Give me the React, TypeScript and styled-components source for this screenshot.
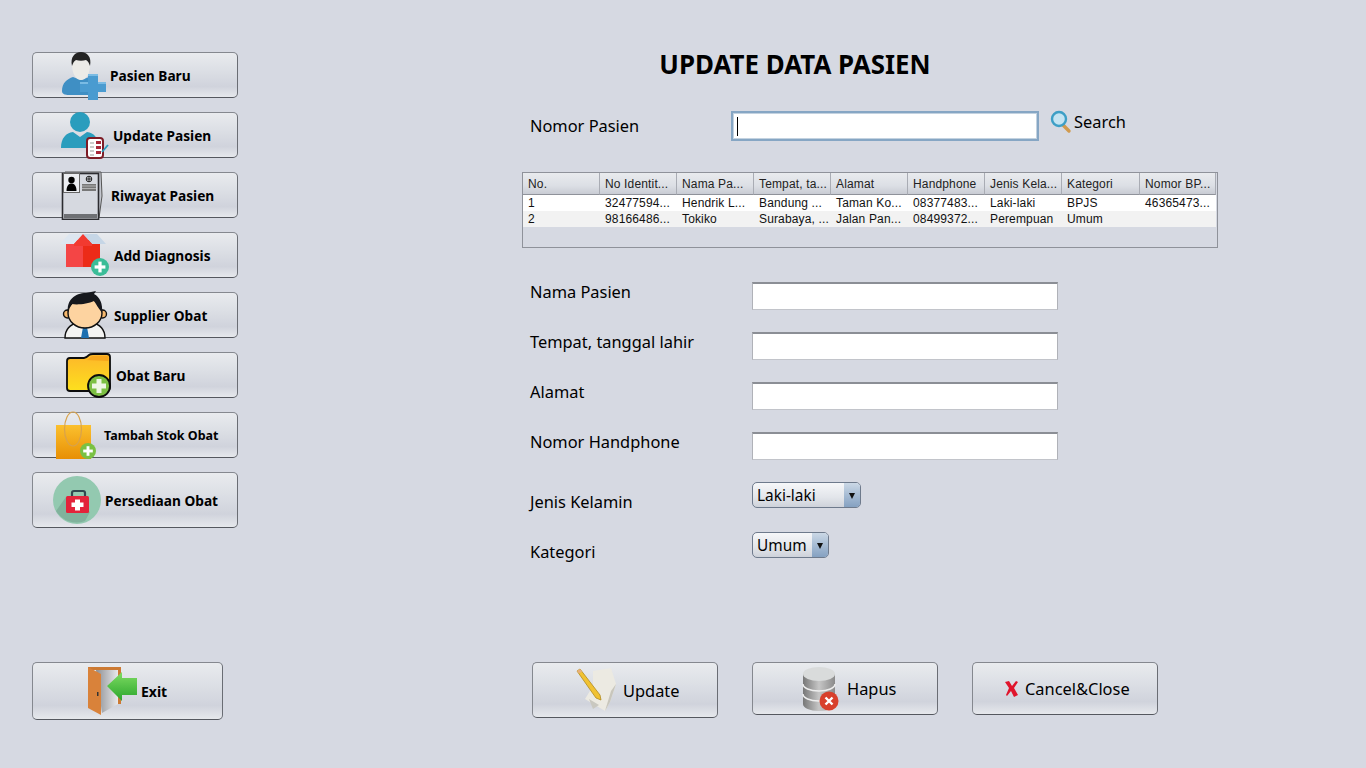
import styled, { createGlobalStyle } from 'styled-components';

const GlobalStyle = createGlobalStyle`
  html, body {
    margin: 0;
    padding: 0;
    background: #d6d9e2;
  }
  * {
    box-sizing: border-box;
  }
`;

/* ===== icons ===== */

function PlusBadge({ cx, cy, r, fill, stroke }: { cx: number; cy: number; r: number; fill: string; stroke?: string }) {
  const arm = r * 0.6;
  const w = r * 0.36;
  return (
    <g>
      <circle cx={cx} cy={cy} r={r} fill={fill} stroke={stroke} strokeWidth={stroke ? 1.6 : 0} />
      <rect x={cx - arm} y={cy - w / 2} width={arm * 2} height={w} fill="#fff" />
      <rect x={cx - w / 2} y={cy - arm} width={w} height={arm * 2} fill="#fff" />
    </g>
  );
}

const PasienBaruIcon = () => (
  <IconSvg width="50" height="50" viewBox="0 0 50 50">
    <path d="M2 41c0-8 5-12 11-14l8 3 8-3 6 5v13H9c-4 0-7-1-7-4z" fill="#3f8fc4" />
    <path d="M12 14c0-7 4-11 9-11s9 4 9 11c0 10-4 16-9 16s-9-6-9-16z" fill="#ecebe7" />
    <path d="M12 16c-2-9 3-14 9-14s11 5 9 14c-1-3-2-5-4-6-3 1-7 1-10 0-2 1-3 3-4 6z" fill="#242424" />
    <path d="M28 24h10v8h8v10h-8v8H28v-8h-8V32h8z" fill="#4a9bd0" />
    <path d="M28 24h10v2H28zM20 32h8v2h-8zM38 32h8v2h-8z" fill="#7abbe4" />
  </IconSvg>
);

const UpdatePasienIcon = () => (
  <IconSvg width="50" height="50" viewBox="0 0 50 50">
    <circle cx="20" cy="12" r="10" fill="#2a9dbd" />
    <path d="M1 38c0-10 5-15 12-16l7 5 7-5c7 1 12 6 12 16z" fill="#2a9dbd" />
    <rect x="27" y="28" width="16" height="20" rx="3" fill="#fff" stroke="#7d1c26" strokeWidth="2" />
    <path d="M30 33h4M30 37h4M30 41h4M30 45h4" stroke="#999" strokeWidth="1" />
    <path d="M36 31h5v3h-5zM36 36h5v3h-5zM36 41h5v3h-5z" fill="#a8283a" />
    <path d="M42 42l6-7" stroke="#2a9dbd" strokeWidth="1.8" />
  </IconSvg>
);

const RiwayatIcon = () => (
  <IconSvg width="50" height="50" viewBox="0 0 50 50">
    <path d="M5 2h36l1 24-3 22" fill="#c4c7cf" stroke="#555" strokeWidth="1" />
    <rect x="2.5" y="3.5" width="36" height="46" fill="#d6d9e0" stroke="#2c2c30" strokeWidth="1.6" />
    <rect x="3.5" y="3.5" width="16" height="19" fill="#eceef2" stroke="#666" strokeWidth="1" />
    <circle cx="11.5" cy="10" r="3.2" fill="#000" />
    <path d="M6.5 21c0-5 2-7.500 5-7.500s5 2.500 5 7.500z" fill="#000" />
    <circle cx="29" cy="9" r="2.800" fill="none" stroke="#222" strokeWidth="1" />
    <path d="M26 9h6M29 6v6" stroke="#222" strokeWidth="1" />
    <path d="M22 14h14v7H22z" fill="#777" />
    <path d="M22 16h14M22 18.500h14" stroke="#ccc" strokeWidth="0.7" />
    <rect x="4" y="44" width="33" height="4.500" fill="#6e7074" />
  </IconSvg>
);

const AddDiagnosisIcon = () => (
  <IconSvg width="50" height="50" viewBox="0 0 50 50">
    <path d="M6 10h17v27H6z" fill="#f44545" />
    <path d="M23 10h17v27H23z" fill="#ec2b18" />
    <path d="M0 14L9 4h14l-9 10z" fill="#dde6f0" />
    <path d="M46 14L37 4H23l9 10z" fill="#c6d6e6" />
    <path d="M14 14L23 4l9 10v2H14z" fill="#f23a30" />
    <PlusBadge cx={40} cy={37} r={9} fill="#3bbd98" />
  </IconSvg>
);

const SupplierIcon = () => (
  <IconSvg width="50" height="50" viewBox="0 0 50 50">
    <path d="M3 48c0-10 6-14 14-16h12c8 2 14 6 14 16z" fill="#f4f4f2" stroke="#111" strokeWidth="1.400" />
    <path d="M20 33h6l-1 4 2 11h-8l2-11z" fill="#1d6fb0" />
    <circle cx="5.500" cy="24" r="4" fill="#f7b96e" stroke="#111" strokeWidth="1.400" />
    <circle cx="40.500" cy="24" r="4" fill="#f7b96e" stroke="#111" strokeWidth="1.400" />
    <ellipse cx="23" cy="23" rx="17" ry="15" fill="#fdd3a0" stroke="#111" strokeWidth="1.400" />
    <path d="M6 23C4 10 13 3 24 3l10-2-2 3c6 3 9 10 8 19-3-4-6-9-8-12-6 3-17 4-22 3-2 2-4 5-4 9z" fill="#16181d" />
  </IconSvg>
);

const ObatBaruIcon = () => (
  <IconSvg width="50" height="50" viewBox="0 0 50 50">
    <defs>
      <linearGradient id="folderFill" x1="0" y1="0" x2="0" y2="1">
        <stop offset="0" stopColor="#fdb62a" />
        <stop offset="1" stopColor="#fde01e" />
      </linearGradient>
    </defs>
    <path d="M3 11c0-2 1-3 3-3h14c2 0 3-1 5-3 1-1 2-1 4-1h14c2 0 3 1 3 3v30c0 3-1 4-3 4H6c-2 0-3-1-3-3z" fill="url(#folderFill)" stroke="#0c0c0c" strokeWidth="1.800" />
    <path d="M22 10c3 0 4-4 7-4h14c1 0 1.500 1 1.500 2v3z" fill="#f7a61c" />
    <circle cx="35" cy="36" r="11" fill="#7cc043" stroke="#0c0c0c" strokeWidth="1.800" />
    <path d="M32.500 29h5v4.500H42v5h-4.500V43h-5v-4.500H28v-5h4.500z" fill="#eef6e4" />
  </IconSvg>
);

const TambahStokIcon = () => (
  <IconSvg width="50" height="50" viewBox="0 0 50 50">
    <defs>
      <linearGradient id="bagFill" x1="0" y1="0" x2="0" y2="1">
        <stop offset="0" stopColor="#fbc02e" />
        <stop offset="1" stopColor="#e88f04" />
      </linearGradient>
    </defs>
    <rect x="2" y="15" width="35" height="34" fill="url(#bagFill)" />
    <ellipse cx="19" cy="19" rx="8.500" ry="17" fill="none" stroke="#d8a24c" strokeWidth="1.200" />
    <PlusBadge cx={34} cy={41} r={8} fill="#7ac143" />
  </IconSvg>
);

const PersediaanIcon = () => (
  <IconSvg width="50" height="50" viewBox="0 0 50 50">
    <circle cx="25" cy="25" r="24" fill="#93c9b0" />
    <path d="M14 22L38 37 33 46A24 24 0 0 1 4 36z" fill="#80b29c" />
    <path d="M20 22v-4c0-1 1-2 2-2h9c1 0 2 1 2 2v4" fill="none" stroke="#30474f" strokeWidth="2.200" />
    <rect x="14" y="21" width="23" height="17" rx="1.500" fill="#e3233a" />
    <path d="M23 24.500h5v3h3.500v4.500H28v3.500h-5V32h-3.500v-4.500H23z" fill="#fff" />
  </IconSvg>
);

const ExitIcon = () => (
  <IconSvg width="52" height="50" viewBox="0 0 52 50">
    <defs>
      <linearGradient id="doorInner" x1="0" y1="0" x2="1" y2="0">
        <stop offset="0" stopColor="#8e9094" />
        <stop offset="1" stopColor="#e8e9ec" />
      </linearGradient>
      <linearGradient id="exitArrow" x1="0" y1="0" x2="0" y2="1">
        <stop offset="0" stopColor="#7fdc63" />
        <stop offset="1" stopColor="#2aa52c" />
      </linearGradient>
    </defs>
    <path d="M2 1h33v37h-3V4H2z" fill="#cc7a33" />
    <path d="M10 4h22v34L16 47z" fill="url(#doorInner)" />
    <path d="M2 1l13 7v41L2 42z" fill="#d9823a" />
    <rect x="11" y="26" width="1.500" height="4" fill="#333" />
    <path d="M21 20L36 6v6h15v17H36v6z" fill="url(#exitArrow)" />
  </IconSvg>
);

const UpdateIcon = () => (
  <IconSvg width="50" height="50" viewBox="0 0 50 50">
    <path d="M21 6l18-3 5 16-6 18-5 9-20-12 8-13z" fill="#eceae2" />
    <path d="M33 46l6-20 5-7-6 18z" fill="#c8c6bc" />
    <path d="M17 34l10 6-6 4z" fill="#c9c8c0" />
    <path d="M5 6l3-2 20 26 1 5-5-2z" fill="#f1c232" stroke="#b08a20" strokeWidth="0.800" />
    <path d="M5 6l3-2 2 2.500-3 2z" fill="#e8b07c" />
  </IconSvg>
);

const HapusIcon = () => (
  <IconSvg width="40" height="50" viewBox="0 0 40 50">
    <defs>
      <linearGradient id="dbBody" x1="0" y1="0" x2="1" y2="0">
        <stop offset="0" stopColor="#777" />
        <stop offset="0.500" stopColor="#c6c6c6" />
        <stop offset="1" stopColor="#8a8a8a" />
      </linearGradient>
    </defs>
    <path d="M3 10v30c0 4 7 7 16 7s16-3 16-7V10z" fill="url(#dbBody)" />
    <path d="M3 20c0 4 7 7 16 7s16-3 16-7M3 30c0 4 7 7 16 7s16-3 16-7" fill="none" stroke="#eee" strokeWidth="1.500" />
    <ellipse cx="19" cy="10" rx="16" ry="7" fill="#d9dbdb" />
    <circle cx="29" cy="37" r="9.500" fill="#d8402c" />
    <path d="M25.500 33.500l7 7M32.500 33.500l-7 7" stroke="#fff" strokeWidth="2.400" />
  </IconSvg>
);

const CancelIcon = () => (
  <IconSvg width="16" height="18" viewBox="0 0 16 18">
    <path d="M1 2l4-1 3 5 4-5 2 1-4 6 4 7-4 2-3-6-4 5-1-1 3-7z" fill="#e0152c" />
  </IconSvg>
);

const SearchIcon = () => (
  <IconSvg width="22" height="24" viewBox="0 0 22 24">
    <path d="M13 15l6 6" stroke="#d19a4e" strokeWidth="3.400" strokeLinecap="round" />
    <circle cx="9" cy="9" r="7" fill="#c5e4f2" stroke="#3d9fc6" strokeWidth="2.400" />
  </IconSvg>
);

/* ===== data ===== */

const menuItems = [
  { label: 'Pasien Baru', icon: <PasienBaruIcon />, pad: 27, gap: 0 },
  { label: 'Update Pasien', icon: <UpdatePasienIcon />, pad: 27, gap: 3 },
  { label: 'Riwayat Pasien', icon: <RiwayatIcon />, pad: 27, gap: 1 },
  { label: 'Add Diagnosis', icon: <AddDiagnosisIcon />, pad: 27, gap: 4 },
  { label: 'Supplier Obat', icon: <SupplierIcon />, pad: 29, gap: 2 },
  { label: 'Obat Baru', icon: <ObatBaruIcon />, pad: 31, gap: 2 },
  { label: 'Tambah Stok Obat', icon: <TambahStokIcon />, pad: 21, gap: 0, small: true },
  { label: 'Persediaan Obat', icon: <PersediaanIcon />, pad: 19, gap: 3, tall: true },
];

const columns = ['No.', 'No Identit...', 'Nama Pa...', 'Tempat, ta...', 'Alamat', 'Handphone', 'Jenis Kela...', 'Kategori', 'Nomor BP...'];

const rows = [
  ['1', '32477594...', 'Hendrik L...', 'Bandung ...', 'Taman Ko...', '08377483...', 'Laki-laki', 'BPJS', '46365473...'],
  ['2', '98166486...', 'Tokiko', 'Surabaya, ...', 'Jalan Pan...', '08499372...', 'Perempuan', 'Umum', ''],
];

const textFields = ['Nama Pasien', 'Tempat, tanggal lahir', 'Alamat', 'Nomor Handphone'];

/* ===== page ===== */

export default function App() {
  return (
    <>
      <GlobalStyle />
      <Page>
        <Sidebar>
          {menuItems.map((item) => (
            <MenuButton key={item.label} $pad={item.pad} $gap={item.gap} $tall={item.tall} $small={item.small}>
              {item.icon}
              {item.label}
            </MenuButton>
          ))}
          <ExitButton>
            <ExitIcon />
            Exit
          </ExitButton>
        </Sidebar>

        <Main>
          <Title>UPDATE DATA PASIEN</Title>

          <SearchRow>
            <SearchLabel>Nomor Pasien</SearchLabel>
            <SearchInput>
              <Caret />
            </SearchInput>
            <SearchLink>
              <SearchIcon />
              Search
            </SearchLink>
          </SearchRow>

          <TableFrame>
            <DataTable>
              <thead>
                <tr>
                  {columns.map((col) => (
                    <HeadCell key={col}>{col}</HeadCell>
                  ))}
                </tr>
              </thead>
              <tbody>
                {rows.map((row) => (
                  <BodyRow key={row[0]}>
                    {row.map((cell, i) => (
                      <BodyCell key={i}>{cell}</BodyCell>
                    ))}
                  </BodyRow>
                ))}
              </tbody>
            </DataTable>
          </TableFrame>

          <Form>
            {textFields.map((label) => (
              <FieldRow key={label}>
                <FieldLabel>{label}</FieldLabel>
                <TextField />
              </FieldRow>
            ))}
            <SelectRow>
              <SelectLabel>Jenis Kelamin</SelectLabel>
              <ComboBox $width={109}>
                Laki-laki
                <ComboArrow />
              </ComboBox>
            </SelectRow>
            <SelectRow>
              <SelectLabel>Kategori</SelectLabel>
              <ComboBox $width={77}>
                Umum
                <ComboArrow />
              </ComboBox>
            </SelectRow>
          </Form>

          <Actions>
            <ActionButton $pad={39} $gap={1} $height={56}>
              <UpdateIcon />
              Update
            </ActionButton>
            <ActionButton $pad={47} $gap={7} $height={53}>
              <HapusIcon />
              Hapus
            </ActionButton>
            <ActionButton $pad={31} $gap={5} $height={53}>
              <CancelIcon />
              Cancel&amp;Close
            </ActionButton>
          </Actions>
        </Main>
      </Page>
    </>
  );
}

/* ===== styles ===== */

const uiFont = `"Noto Sans", "DejaVu Sans", sans-serif`;

const Page = styled.div`
  display: flex;
  width: 1366px;
  height: 768px;
  overflow: hidden;
  background: #d6d9e2;
  color: #000;
  font-family: ${uiFont};
`;

const IconSvg = styled.svg`
  flex-shrink: 0;
  display: block;
`;

const buttonSkin = `
  border: 1px solid #85888f;
  border-right-color: #6a6d74;
  border-bottom-color: #55585f;
  border-radius: 5px;
  background: linear-gradient(#e9ebee 0%, #dcdfe5 40%, #d0d3dc 76%, #e6e8ec 100%);
`;

const Sidebar = styled.nav`
  display: flex;
  flex-direction: column;
  gap: 14px;
  width: 522px;
  flex-shrink: 0;
  padding: 52px 0 48px 32px;
`;

const MenuButton = styled.div<{ $pad: number; $gap: number; $tall?: boolean; $small?: boolean }>`
  ${buttonSkin}
  display: flex;
  align-items: center;
  gap: ${(props) => props.$gap}px;
  width: 206px;
  height: ${(props) => (props.$tall ? 56 : 46)}px;
  padding-left: ${(props) => props.$pad}px;
  font-size: ${(props) => (props.$small ? 12.5 : 13.7)}px;
  font-weight: 700;
  white-space: nowrap;
`;

const ExitButton = styled.div`
  ${buttonSkin}
  display: flex;
  align-items: center;
  gap: 3px;
  width: 191px;
  height: 58px;
  margin-top: auto;
  padding-left: 53px;
  font-size: 14px;
  font-weight: 700;
`;

const Main = styled.main`
  display: flex;
  flex-direction: column;
  width: 696px;
  padding: 52px 0 50px;
`;

const Title = styled.h1`
  width: 546px;
  height: 26px;
  margin: -1px 0 1px;
  font-size: 25.9px;
  line-height: 26px;
  font-weight: 700;
  text-align: center;
  white-space: nowrap;
`;

const SearchRow = styled.div`
  display: flex;
  align-items: center;
  height: 30px;
  margin-top: 33px;
  padding-left: 8px;
`;

const SearchLabel = styled.label`
  width: 201px;
  padding-bottom: 2px;
  font-size: 16.4px;
`;

const SearchInput = styled.div`
  display: flex;
  align-items: center;
  width: 308px;
  height: 30px;
  padding-left: 4px;
  background: #fff;
  border: 2px solid #86a6c4;
  box-shadow: inset 0 0 0 1px #c3d2e0;
`;

const Caret = styled.span`
  width: 1px;
  height: 19px;
  background: #000;
`;

const SearchLink = styled.div`
  display: flex;
  align-items: center;
  gap: 2px;
  height: 24px;
  margin: -9px 0 0 11px;
  font-size: 16.4px;
`;

const TableFrame = styled.div`
  width: 696px;
  height: 76px;
  margin-top: 31px;
  border: 1px solid #8f929a;
`;

const DataTable = styled.table`
  width: 693px;
  border-collapse: separate;
  border-spacing: 0;
  table-layout: fixed;
  font-family: "Liberation Sans", Arial, sans-serif;
  font-size: 12px;
  letter-spacing: 0.15px;
`;

const HeadCell = styled.th`
  width: 77px;
  height: 22px;
  padding: 0 0 0 5px;
  border-right: 1px solid #a9acb4;
  border-bottom: 1px solid #8f929a;
  background: linear-gradient(#e9ebee 0%, #dcdfe5 60%, #c9ccd4 100%);
  color: #222;
  font-weight: 400;
  text-align: left;
  white-space: nowrap;
  overflow: hidden;
  &:nth-child(8) {
    width: 78px;
  }
  &:nth-child(9) {
    width: 76px;
  }
`;

const BodyRow = styled.tr`
  height: 16px;
  background: #fff;
  &:nth-child(even) {
    background: #f2f2f2;
  }
`;

const BodyCell = styled.td`
  height: 16px;
  padding: 0 0 0 5px;
  color: #111;
  line-height: 16px;
  white-space: nowrap;
  overflow: hidden;
`;

const Form = styled.div`
  display: flex;
  flex-direction: column;
  margin-top: 34px;
`;

const FieldRow = styled.div`
  display: flex;
  align-items: center;
  height: 28px;
  margin-bottom: 22px;
  padding-left: 8px;
`;

const FieldLabel = styled.label`
  width: 222px;
  padding-bottom: 10px;
  font-size: 16.4px;
  white-space: nowrap;
`;

const TextField = styled.div`
  width: 306px;
  height: 28px;
  background: #fff;
  border: 1px solid #b0b2b8;
  border-top: 2px solid #8b8e95;
  border-bottom-color: #c2c4ca;
`;

const SelectRow = styled(FieldRow)`
  height: 26px;
  margin-bottom: 24px;
`;

const SelectLabel = styled(FieldLabel)`
  padding: 13px 0 0;
`;

const ComboBox = styled.div<{ $width: number }>`
  display: flex;
  align-items: center;
  justify-content: space-between;
  width: ${(props) => props.$width}px;
  height: 26px;
  padding-left: 4px;
  border: 1px solid #6e7a8c;
  border-radius: 5px;
  background: linear-gradient(#f6f7f9 0%, #e2e5ea 60%, #ced2da 100%);
  font-size: 15.4px;
  overflow: hidden;
`;

const ComboArrow = styled.span`
  position: relative;
  width: 16px;
  height: 100%;
  background: linear-gradient(#cbd8e6 0%, #a3b9d2 55%, #85a1c1 100%);
  &::after {
    content: '';
    position: absolute;
    left: 5px;
    top: 10px;
    border-left: 3px solid transparent;
    border-right: 3px solid transparent;
    border-top: 6px solid #111;
  }
`;

const Actions = styled.div`
  display: flex;
  align-items: flex-start;
  gap: 34px;
  margin-top: auto;
  height: 56px;
  padding-left: 10px;
`;

const ActionButton = styled.div<{ $pad: number; $gap: number; $height: number }>`
  ${buttonSkin}
  display: flex;
  align-items: center;
  gap: ${(props) => props.$gap}px;
  width: 186px;
  height: ${(props) => props.$height}px;
  padding-left: ${(props) => props.$pad}px;
  font-size: 16.4px;
  white-space: nowrap;
`;
